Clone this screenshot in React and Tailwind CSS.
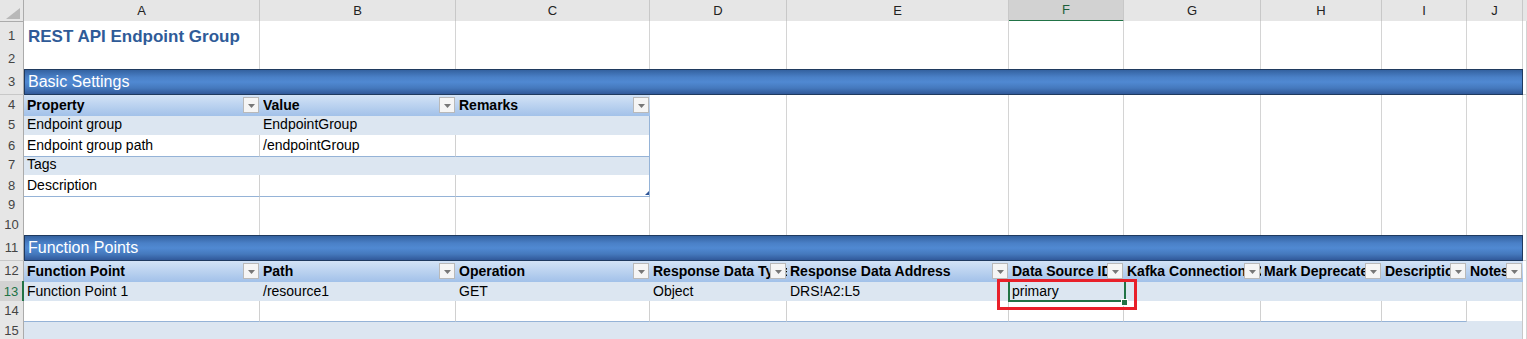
import React from "react";

const GRID =
  "grid grid-cols-[24px_236px_196px_194px_137px_222px_115px_137px_121px_85px_56px_4px]";

const BLANK = "bg-white border-r border-b border-r-[#d4d4d4] border-b-[#d4d4d4]";
const THEAD =
  "relative flex items-center pl-[3px] font-bold text-black bg-[linear-gradient(to_bottom,#d3e3f6,#a2c1e9)]";
const BANDED =
  "bg-[#dce6f1] border-b border-b-[#95b3d7] flex items-center pl-[3px] whitespace-nowrap overflow-hidden";
const WHITE =
  "relative bg-white border-r border-b border-r-[#d0d0d0] border-b-[#95b3d7] flex items-center pl-[3px] whitespace-nowrap";
const WHITE_END =
  "relative bg-white border-r border-b border-r-[#95b3d7] border-b-[#95b3d7] flex items-center pl-[3px] whitespace-nowrap";
const BAND =
  "col-span-10 flex items-center pl-[3px] text-white text-[16px] border border-[#1f3a5f] bg-[linear-gradient(to_bottom,#3462a0,#4a80c7_30%,#5089d2_50%,#4579bd_75%,#31599a)]";

function RH({ n, sel }) {
  return sel ? (
    <div className="bg-[#d2d2d2] border-r-2 border-b border-r-[#217346] border-b-[#c8c8c8] flex items-center justify-center text-[13px] text-[#217346]">
      {n}
    </div>
  ) : (
    <div className="bg-[#e6e6e6] border-r border-b border-r-[#ababab] border-b-[#c8c8c8] flex items-center justify-center text-[13px] text-[#444]">
      {n}
    </div>
  );
}

function Blanks({ count }) {
  return Array.from({ length: count }).map((_, i) => (
    <div key={i} className={BLANK} />
  ));
}

function Drop() {
  return (
    <div className="absolute right-[1px] top-[2px] w-4 h-4 border border-[#b9b9b9] bg-[#f5f5f5] flex items-center justify-center">
      <svg width="7" height="4" viewBox="0 0 7 4" className="mt-[1px]">
        <path d="M0 0H7L3.5 4Z" fill="#777" />
      </svg>
    </div>
  );
}

function TH({ label }) {
  return (
    <div className={THEAD}>
      <span className="block w-full overflow-hidden whitespace-nowrap">{label}</span>
      <Drop />
    </div>
  );
}

const letters = ["A", "B", "C", "D", "E", "F", "G", "H", "I", "J"];

export default function App() {
  return (
    <div className="w-[1527px] h-[339px] overflow-hidden bg-white font-['Liberation_Sans',Arial,sans-serif] text-[14px] text-black">
      {/* Column headers */}
      <div className={`${GRID} h-[21px]`}>
        <div className="relative bg-[#e6e6e6] border-r border-b border-r-[#ababab] border-b-[#ababab]">
          <svg width="14" height="11" viewBox="0 0 14 11" className="absolute right-[3px] bottom-[2px]">
            <path d="M14 0V11H0Z" fill="#b8b8b8" />
          </svg>
        </div>
        {letters.map((l) =>
          l === "F" ? (
            <div
              key={l}
              className="bg-[#d2d2d2] border-r border-b-2 border-r-[#c8c8c8] border-b-[#217346] flex items-center justify-center text-[13px] text-[#1d5f3a]"
            >
              {l}
            </div>
          ) : (
            <div
              key={l}
              className="bg-[#e6e6e6] border-r border-b border-r-[#c8c8c8] border-b-[#ababab] flex items-center justify-center text-[13px] text-[#222]"
            >
              {l}
            </div>
          )
        )}
        <div className="bg-[#e6e6e6] border-b border-b-[#ababab]" />
      </div>

      {/* Row 1 */}
      <div className={`${GRID} h-[28px]`}>
        <RH n="1" />
        <div className="bg-white border-r border-b border-r-[#d4d4d4] border-b-black flex items-center pl-[4px] pt-[3px] text-[17px] font-bold text-[#2f5b98] whitespace-nowrap">
          REST API Endpoint Group
        </div>
        {Array.from({ length: 10 }).map((_, i) => (
          <div key={i} className="bg-white border-r border-b border-r-[#d4d4d4] border-b-black" />
        ))}
      </div>

      {/* Row 2 */}
      <div className={`${GRID} h-[20px]`}>
        <RH n="2" />
        <Blanks count={11} />
      </div>

      {/* Row 3 */}
      <div className={`${GRID} h-[26px]`}>
        <RH n="3" />
        <div className={BAND}>Basic Settings</div>
        <div className={BLANK} />
      </div>

      {/* Row 4 */}
      <div className={`${GRID} h-[20px]`}>
        <RH n="4" />
        <TH label="Property" />
        <TH label="Value" />
        <TH label="Remarks" />
        <Blanks count={8} />
      </div>

      {/* Row 5 */}
      <div className={`${GRID} h-[20px]`}>
        <RH n="5" />
        <div className={BANDED}>Endpoint group</div>
        <div className={BANDED}>EndpointGroup</div>
        <div className={`${BANDED} border-r border-r-[#95b3d7]`} />
        <Blanks count={8} />
      </div>

      {/* Row 6 */}
      <div className={`${GRID} h-[20px]`}>
        <RH n="6" />
        <div className={WHITE}>Endpoint group path</div>
        <div className={WHITE}>/endpointGroup</div>
        <div className={WHITE_END} />
        <Blanks count={8} />
      </div>

      {/* Row 7 */}
      <div className={`${GRID} h-[20px]`}>
        <RH n="7" />
        <div className={BANDED}>Tags</div>
        <div className={BANDED} />
        <div className={`${BANDED} border-r border-r-[#95b3d7]`} />
        <Blanks count={8} />
      </div>

      {/* Row 8 */}
      <div className={`${GRID} h-[20px]`}>
        <RH n="8" />
        <div className={WHITE}>Description</div>
        <div className={WHITE} />
        <div className={WHITE_END}>
          <svg width="4" height="4" viewBox="0 0 4 4" className="absolute right-[0px] bottom-[1px]">
            <path d="M4 0V4H0Z" fill="#2f5597" />
          </svg>
        </div>
        <Blanks count={8} />
      </div>

      {/* Row 9 */}
      <div className={`${GRID} h-[20px]`}>
        <RH n="9" />
        <Blanks count={11} />
      </div>

      {/* Row 10 */}
      <div className={`${GRID} h-[20px]`}>
        <RH n="10" />
        <Blanks count={11} />
      </div>

      {/* Row 11 */}
      <div className={`${GRID} h-[26px]`}>
        <RH n="11" />
        <div className={BAND}>Function Points</div>
        <div className={BLANK} />
      </div>

      {/* Row 12 */}
      <div className={`${GRID} h-[20px]`}>
        <RH n="12" />
        <TH label="Function Point" />
        <TH label="Path" />
        <TH label="Operation" />
        <TH label="Response Data Type" />
        <TH label="Response Data Address" />
        <TH label="Data Source ID" />
        <TH label="Kafka Connection ID" />
        <TH label="Mark Deprecated" />
        <TH label="Description" />
        <TH label="Notes" />
        <div className={BLANK} />
      </div>

      {/* Row 13 */}
      <div className={`${GRID} h-[20px]`}>
        <RH n="13" sel />
        <div className={BANDED}>Function Point 1</div>
        <div className={BANDED}>/resource1</div>
        <div className={BANDED}>GET</div>
        <div className={BANDED}>Object</div>
        <div className={BANDED}>DRS!A2:L5</div>
        <div className={`${BANDED} relative overflow-visible`}>
          primary
          <div className="absolute left-[-1px] top-[-1px] w-[118px] h-[22px] border-2 border-[#217346] z-10 pointer-events-none" />
          <div className="absolute right-[-4px] bottom-[-4px] w-[7px] h-[7px] bg-[#217346] border border-white z-10" />
          <div className="absolute left-[-12px] top-[-2px] w-[140px] h-[31px] border-[3px] border-[#e8202a] z-20 pointer-events-none" />
        </div>
        <div className={BANDED} />
        <div className={BANDED} />
        <div className={BANDED} />
        <div className={`${BANDED} border-r border-r-[#c8c8c8]`} />
        <div className={BLANK} />
      </div>

      {/* Row 14 */}
      <div className={`${GRID} h-[20px]`}>
        <RH n="14" />
        {Array.from({ length: 9 }).map((_, i) => (
          <div key={i} className={WHITE} />
        ))}
        <div className="bg-white border-r border-b border-r-[#c8c8c8] border-b-[#95b3d7]" />
        <div className={BLANK} />
      </div>

      {/* Row 15 */}
      <div className={`${GRID} h-[20px]`}>
        <RH n="15" />
        <div className={`${BANDED} col-span-10 border-r border-r-[#c8c8c8]`} />
        <div className={BLANK} />
      </div>
    </div>
  );
}
